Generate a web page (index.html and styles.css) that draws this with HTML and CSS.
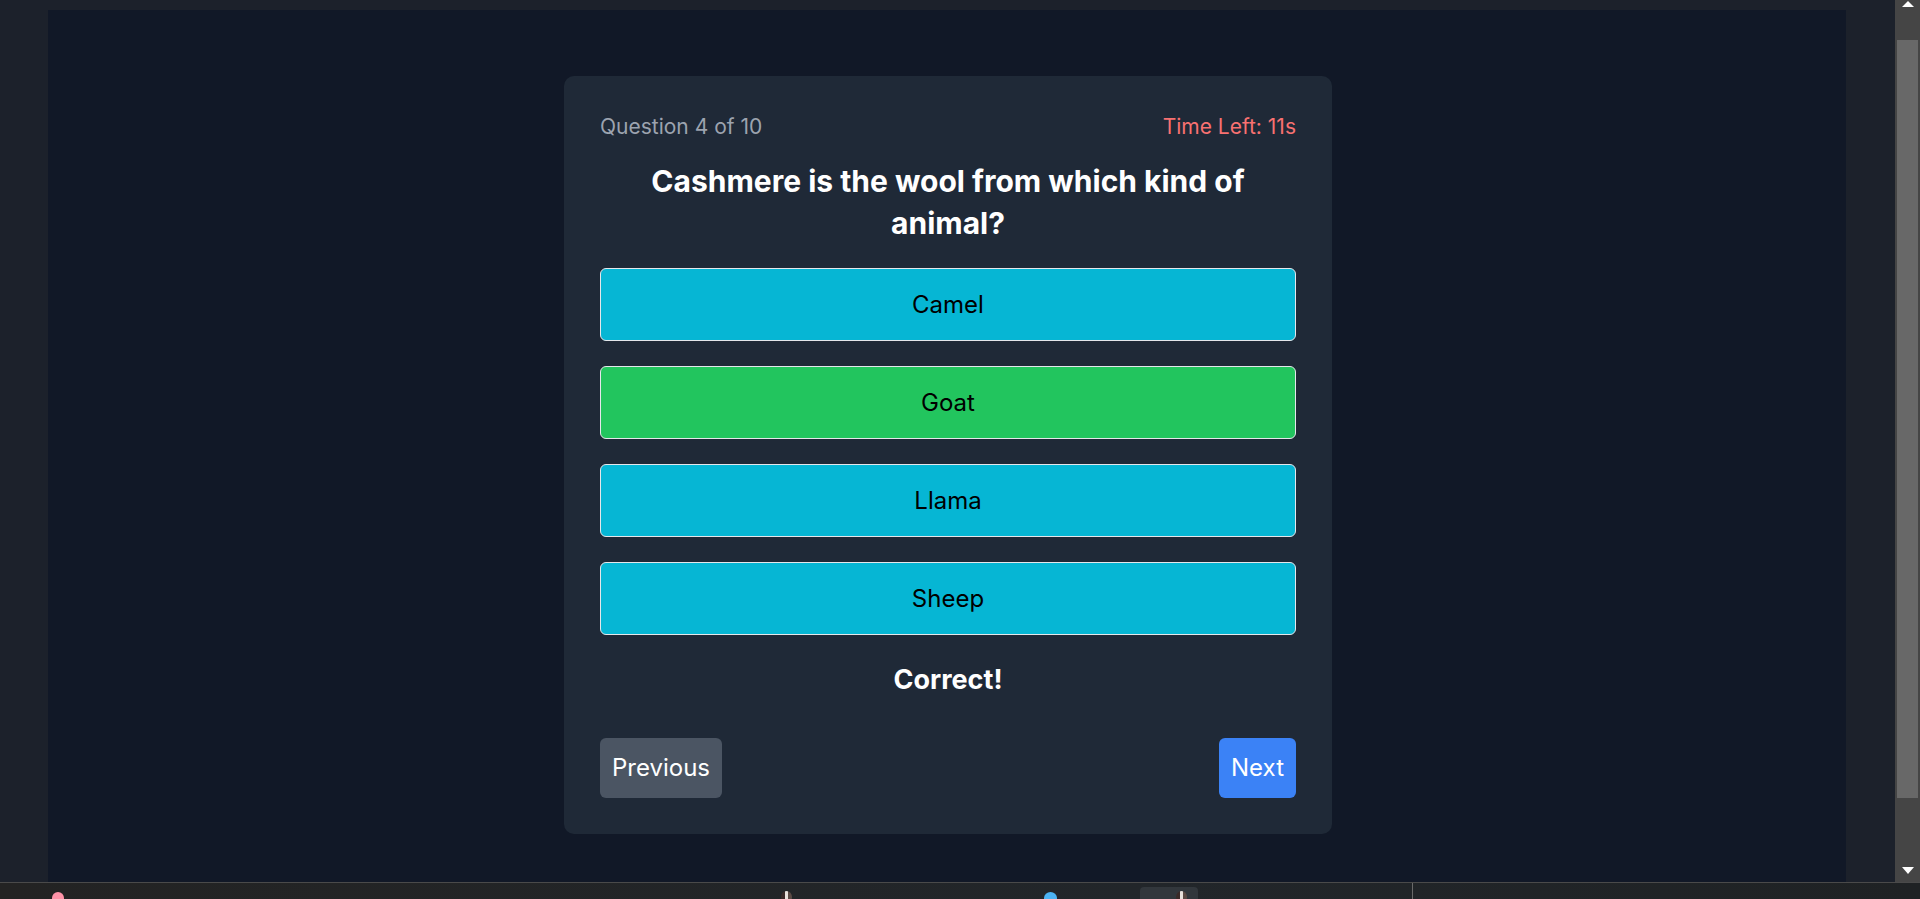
FILE: index.html
```html
<!DOCTYPE html>
<html lang="en">
<head>
<meta charset="utf-8">
<title>Quiz</title>
<link rel="stylesheet" href="styles.css">
</head>
<body>
<div class="screen">
  <div class="viewport">
    <div class="page">
      <main class="app">
        <section class="card">
          <div class="card-head">
            <span class="q-count">Question 4 of 10</span>
            <span class="timer">Time Left: 11s</span>
          </div>
          <h2 class="question">Cashmere is the wool from which kind of animal?</h2>
          <div class="answers">
            <button class="answer">Camel</button>
            <button class="answer correct">Goat</button>
            <button class="answer">Llama</button>
            <button class="answer">Sheep</button>
          </div>
          <p class="feedback">Correct!</p>
          <div class="nav">
            <button class="nav-btn prev">Previous</button>
            <button class="nav-btn next">Next</button>
          </div>
        </section>
      </main>
    </div>
    <div class="scrollbar">
      <div class="sb-up"><span class="tri-up"></span></div>
      <div class="sb-thumb"></div>
      <div class="sb-track"></div>
      <div class="sb-down"><span class="tri-down"></span></div>
    </div>
  </div>
  <div class="taskbar">
    <span class="tb-icon tb-pink"></span>
    <span class="tb-icon tb-avatar"></span>
    <span class="tb-icon tb-blue"></span>
    <span class="tb-active"><span class="tb-icon tb-avatar2"></span></span>
    <span class="tb-sep"></span>
  </div>
</div>
</body>
</html>
```

FILE: styles.css
```css
html, body {
  margin: 0;
  padding: 0;
  height: 100%;
}

body {
  font-family: Inter, "Noto Sans", sans-serif;
  background: #1c212b;
  overflow: hidden;
}

.screen {
  display: flex;
  flex-direction: column;
  height: 899px;
}

.viewport {
  display: flex;
  height: 882px;
  flex: none;
}

.page {
  flex: 1;
  display: flex;
  background: #1c212b;
  padding: 10px 49px 0 48px;
}

.app {
  flex: 1;
  display: flex;
  justify-content: center;
  align-items: flex-start;
  background: #111827;
  padding-top: 66px;
  padding-left: 2px;
}

.card {
  width: 768px;
  box-sizing: border-box;
  padding: 36px;
  background: #1f2937;
  border-radius: 10px;
}

.card-head {
  display: flex;
  justify-content: space-between;
  font-size: 21px;
  line-height: 30px;
  margin-bottom: 18px;
}

.q-count {
  color: #9ca3af;
}

.timer {
  color: #f87171;
}

.question {
  margin: 0 0 24px;
  font-size: 30px;
  line-height: 42px;
  font-weight: 700;
  color: #ffffff;
  text-align: center;
}

.answers {
  display: flex;
  flex-direction: column;
  gap: 25px;
}

.answer {
  height: 73px;
  box-sizing: border-box;
  border: 1px solid #e5e7eb;
  border-radius: 6px;
  background: #06b6d4;
  color: #000000;
  font-family: Inter, "Noto Sans", sans-serif;
  font-size: 24px;
  line-height: 36px;
  display: flex;
  align-items: center;
  justify-content: center;
  padding: 0;
}

.answer.correct {
  background: #22c55e;
}

.feedback {
  margin: 24px 0 0;
  font-size: 27px;
  line-height: 42px;
  font-weight: 700;
  color: #ffffff;
  text-align: center;
}

.nav {
  margin-top: 37px;
  display: flex;
  justify-content: space-between;
}

.nav-btn {
  height: 60px;
  padding: 0 12px;
  border: 0;
  border-radius: 6px;
  color: #ffffff;
  font-family: Inter, "Noto Sans", sans-serif;
  font-size: 24px;
  line-height: 36px;
}

.prev {
  background: #4b5563;
}

.next {
  background: #3b82f6;
}

/* scrollbar */
.scrollbar {
  width: 25px;
  flex: none;
  background: #454545;
  display: flex;
  flex-direction: column;
  align-items: center;
}

.sb-up {
  height: 40px;
  width: 100%;
  display: flex;
  justify-content: center;
  padding-top: 1px;
  box-sizing: border-box;
}

.tri-up {
  width: 0;
  height: 0;
  border-left: 6px solid transparent;
  border-right: 6px solid transparent;
  border-bottom: 6px solid #ffffff;
}

.sb-thumb {
  width: 21px;
  height: 758px;
  background: #686868;
}

.sb-track {
  flex: 1;
}

.sb-down {
  height: 24px;
  width: 100%;
  display: flex;
  justify-content: center;
  align-items: center;
  padding-left: 1px;
  box-sizing: border-box;
}

.tri-down {
  width: 0;
  height: 0;
  border-left: 6px solid transparent;
  border-right: 6px solid transparent;
  border-top: 7px solid #ffffff;
}

/* taskbar */
.taskbar {
  height: 17px;
  flex: none;
  box-sizing: border-box;
  border-top: 1px solid #4a4a4a;
  background: linear-gradient(90deg, #232323, #22262a 60%, #1f2224);
  display: flex;
  align-items: flex-start;
  overflow: hidden;
}

.tb-icon {
  display: block;
  border-radius: 50%;
  flex: none;
}

.tb-pink {
  width: 12px;
  height: 12px;
  margin: 9px 0 0 52px;
  background: #ff93a8;
}

.tb-avatar {
  width: 11px;
  height: 12px;
  margin: 8px 0 0 717px;
  background: linear-gradient(90deg, #3a2a28 0 35%, #e8e1dc 35% 65%, #5b4a44 65%);
}

.tb-blue {
  width: 13px;
  height: 12px;
  margin: 9px 0 0 252px;
  background: #4cb3f4;
}

.tb-active {
  display: flex;
  width: 58px;
  height: 12px;
  margin: 4px 0 0 83px;
  background: #32373c;
  border-radius: 4px 4px 0 0;
  flex: none;
}

.tb-avatar2 {
  width: 11px;
  height: 12px;
  margin: 4px 0 0 36px;
  background: linear-gradient(90deg, #3a2a28 0 35%, #e8e1dc 35% 65%, #5b4a44 65%);
}

.tb-sep {
  display: block;
  width: 1px;
  height: 17px;
  margin-left: 214px;
  margin-top: -1px;
  background: #6a6a6a;
  flex: none;
}
```
